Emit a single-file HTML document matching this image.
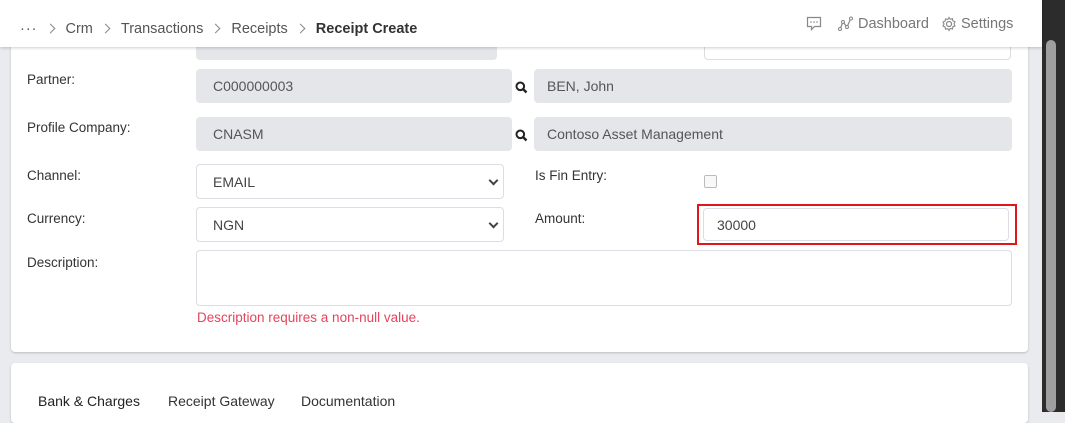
<!DOCTYPE html>
<html><head><style>
*{box-sizing:border-box;margin:0;padding:0}
body{width:1065px;height:412px;overflow:hidden;background:#e9ebee;font-family:"Liberation Sans",sans-serif;font-size:14px;color:#333;position:relative}
.a{position:absolute}
.card{background:#fff;border-radius:4px;box-shadow:0 1px 2px rgba(0,0,0,.2)}
.lbl{font-size:13.5px;color:#333}
.ro{background:#e4e6ea;border-radius:4px;color:#555;font-size:14px;padding-left:17px;line-height:35px}
.in{background:#fff;border:1px solid #dadde2;border-radius:4px;color:#444;padding-left:16px;font-size:14px}
.chev{position:absolute;right:6px;top:12px;width:7px;height:7px;border-right:2px solid #444;border-bottom:2px solid #444;transform:rotate(45deg)}
.bc{display:inline-block;width:7px;height:7px;border-right:1px solid #888;border-top:1px solid #888;transform:rotate(45deg);margin:0 12px 1px 9px}
</style></head><body>
<div class="a card" style="left:11px;top:20px;width:1017px;height:332px"></div>
<div class="a card" style="left:11px;top:363px;width:1017px;height:60px"></div>
<div class="a" style="left:1042px;top:0;width:23px;height:412px;background:#2c2c2c"></div>
<div class="a" style="left:1046px;top:40px;width:10px;height:372px;background:#9f9f9f;border-radius:5px"></div>

<div class="a ro" style="left:196px;top:30px;width:301px;height:30px"></div>
<div class="a in" style="left:704px;top:30px;width:307px;height:30px"></div>

<div class="a lbl" style="left:27px;top:72px">Partner:</div>
<div class="a ro" style="left:196px;top:69px;width:316px;height:34px">C000000003</div>
<svg class="a" style="left:515px;top:81px" width="13" height="13" viewBox="0 0 13 13"><circle cx="5.3" cy="5.3" r="3.8" fill="none" stroke="#222" stroke-width="2"/><path d="M8 8l3.5 3.5" stroke="#222" stroke-width="2.4"/></svg>
<div class="a ro" style="left:534px;top:69px;width:478px;height:34px;padding-left:13px">BEN, John</div>

<div class="a lbl" style="left:27px;top:120px">Profile Company:</div>
<div class="a ro" style="left:196px;top:117px;width:316px;height:34px">CNASM</div>
<svg class="a" style="left:515px;top:129px" width="13" height="13" viewBox="0 0 13 13"><circle cx="5.3" cy="5.3" r="3.8" fill="none" stroke="#222" stroke-width="2"/><path d="M8 8l3.5 3.5" stroke="#222" stroke-width="2.4"/></svg>
<div class="a ro" style="left:534px;top:117px;width:478px;height:34px;padding-left:13px">Contoso Asset Management</div>

<div class="a lbl" style="left:27px;top:168px">Channel:</div>
<div class="a in" style="left:196px;top:164px;width:308px;height:35px;line-height:35px">EMAIL<span class="chev"></span></div>
<div class="a lbl" style="left:535px;top:168px">Is Fin Entry:</div>
<div class="a" style="left:704px;top:175px;width:13px;height:13px;border:1px solid #bbb;border-radius:2px;background:#f8f8f8"></div>

<div class="a lbl" style="left:27px;top:211px">Currency:</div>
<div class="a in" style="left:196px;top:207px;width:308px;height:35px;line-height:35px">NGN<span class="chev"></span></div>
<div class="a lbl" style="left:535px;top:211px">Amount:</div>
<div class="a" style="left:697px;top:204px;width:320px;height:41px;border:2px solid #e0161b"></div>
<div class="a in" style="left:703px;top:208px;width:306px;height:33px;line-height:33px;padding-left:13px">30000</div>

<div class="a lbl" style="left:27px;top:255px">Description:</div>
<div class="a in" style="left:196px;top:250px;width:816px;height:56px"></div>
<div class="a" style="left:197px;top:310px;color:#e5455b;font-size:13.5px">Description requires a non-null value.</div>

<div class="a" style="left:38px;top:393px;color:#222;font-size:14px">Bank &amp; Charges</div>
<div class="a" style="left:168px;top:393px;color:#333;font-size:14px">Receipt Gateway</div>
<div class="a" style="left:301px;top:393px;color:#333;font-size:14px">Documentation</div>

<div class="a" style="left:0;top:0;width:1042px;height:47px;background:#fff;box-shadow:0 1px 3px rgba(0,0,0,.2)"></div>
<div class="a" style="left:20px;top:21px;font-size:14.5px;color:#555;white-space:nowrap">
<span style="letter-spacing:1px">···</span><span class="bc"></span>Crm<span class="bc"></span>Transactions<span class="bc"></span>Receipts<span class="bc"></span><b style="color:#333">Receipt Create</b></div>
<svg class="a" style="left:806px;top:16px" width="16" height="16" viewBox="0 0 16 16"><path d="M1.5 1.5h13v9h-6l-3 3v-3h-4z" fill="none" stroke="#888" stroke-width="1.2"/><circle cx="5" cy="6" r=".8" fill="#888"/><circle cx="8" cy="6" r=".8" fill="#888"/><circle cx="11" cy="6" r=".8" fill="#888"/></svg>
<svg class="a" style="left:838px;top:16px" width="16" height="16" viewBox="0 0 16 16"><path d="M2 13l3-7 4 5 4-9" fill="none" stroke="#888" stroke-width="1.2"/><circle cx="2" cy="13" r="1.5" fill="#fff" stroke="#888"/><circle cx="5" cy="6" r="1.5" fill="#fff" stroke="#888"/><circle cx="9" cy="11" r="1.5" fill="#fff" stroke="#888"/><circle cx="13" cy="2.5" r="1.5" fill="#fff" stroke="#888"/></svg>
<div class="a" style="left:858px;top:16px;font-size:14.5px;color:#777">Dashboard</div>
<svg class="a" style="left:941px;top:16px" width="16" height="16" viewBox="0 0 16 16"><circle cx="8" cy="8" r="2.5" fill="none" stroke="#888" stroke-width="1.2"/><path d="M8 1.5l1.3 1.8 2.2-.6.4 2.2 2.1.9-1 2 1 2.1-2.1.8-.4 2.3-2.2-.6L8 14.5l-1.3-1.9-2.2.6-.4-2.3-2.1-.8 1-2.1-1-2 2.1-.9.4-2.2 2.2.6z" fill="none" stroke="#888" stroke-width="1.1"/></svg>
<div class="a" style="left:961px;top:16px;font-size:14.5px;color:#777">Settings</div>
</body></html>
